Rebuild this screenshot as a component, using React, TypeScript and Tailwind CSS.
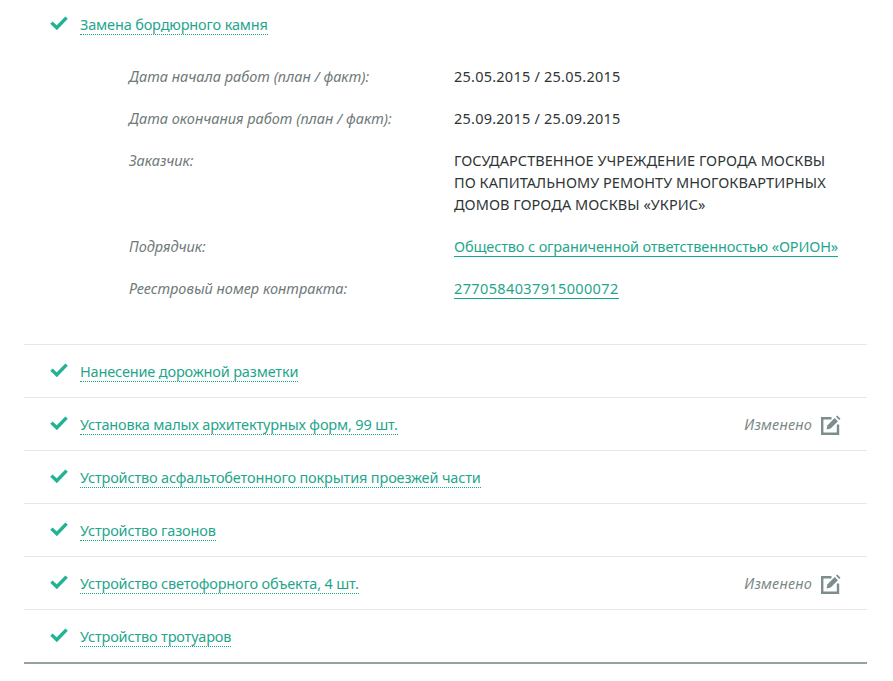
import React from 'react';

const Check = () => (
  <svg width="18" height="14" viewBox="0 0 18 14" className="shrink-0 mt-[-3px]">
    <path d="M1.4 6.6 L6.8 11.8 L16.6 1.6" fill="none" stroke="#22b296" strokeWidth="3.4" />
  </svg>
);

const EditIcon = () => (
  <svg width="20" height="20" viewBox="0 0 20 20">
    <path d="M10.5 3.2H1.2V18.8H17V9.5" fill="none" stroke="#7d8c8c" strokeWidth="2.4" />
    <path d="M5.5 14.5l1-4.2 7.2-7.2 3.2 3.2-7.2 7.2z" fill="#7d8c8c" />
    <path d="M15 1.8l1.3-1.3 3.2 3.2-1.3 1.3z" fill="#7d8c8c" />
  </svg>
);

const Link = ({ children }: { children: React.ReactNode }) => (
  <span className="text-[#1fa68c] border-b border-dotted border-[#13a98a] leading-[20px] inline-block tracking-[-0.16px]">{children}</span>
);

const details = [
  { label: 'Дата начала работ (план / факт):', value: <span className="tracking-[0.23px]">25.05.2015 / 25.05.2015</span> },
  { label: 'Дата окончания работ (план / факт):', value: <span className="tracking-[0.23px]">25.09.2015 / 25.09.2015</span> },
  {
    label: 'Заказчик:',
    value: (
      <span className="block tracking-[0.05px]">
        ГОСУДАРСТВЕННОЕ УЧРЕЖДЕНИЕ ГОРОДА МОСКВЫ<br />
        ПО КАПИТАЛЬНОМУ РЕМОНТУ МНОГОКВАРТИРНЫХ<br />
        ДОМОВ ГОРОДА МОСКВЫ «УКРИС»
      </span>
    ),
  },
  {
    label: 'Подрядчик:',
    value: <span className="text-[#1fa68c] border-b border-[#13a98a] inline-block leading-[20px] tracking-[-0.13px]">Общество с ограниченной ответственностью «ОРИОН»</span>,
  },
  {
    label: 'Реестровый номер контракта:',
    value: <span className="text-[#1fa68c] border-b border-[#13a98a] inline-block leading-[20px] tracking-[0.37px]">2770584037915000072</span>,
  },
];

const rows = [
  { title: 'Нанесение дорожной разметки' },
  { title: 'Установка малых архитектурных форм, 99 шт.', changed: true },
  { title: 'Устройство асфальтобетонного покрытия проезжей части' },
  { title: 'Устройство газонов' },
  { title: 'Устройство светофорного объекта, 4 шт.', changed: true },
  { title: 'Устройство тротуаров' },
];

export default function App() {
  return (
    <div className="w-[893px] h-[681px] overflow-hidden bg-white pl-6 pr-[26px] font-['Noto_Sans',sans-serif] text-[14.5px] text-[#2f3535]">
      <div className="h-[345px] border-b border-[#e6e8e8]">
        <div className="flex items-center h-[49px] pl-[26px] gap-3">
          <Check />
          <Link>Замена бордюрного камня</Link>
        </div>
        <div className="pl-[105px] pt-[16px] flex flex-col gap-[20px]">
          {details.map(d => (
            <div key={d.label} className="flex leading-[22px]">
              <div className="w-[325px] shrink-0 italic text-[#6f7a7a]">{d.label}</div>
              <div>{d.value}</div>
            </div>
          ))}
        </div>
      </div>
      {rows.map((r, i) => (
        <div
          key={r.title}
          className={`flex items-center pl-[26px] pr-[26px] gap-3 ${i === rows.length - 1 ? 'h-[54px] border-b-2 border-[#94a3a1]' : 'h-[53px] border-b border-[#e6e8e8]'}`}
        >
          <Check />
          <Link>{r.title}</Link>
          {r.changed && (
            <div className="ml-auto flex items-center gap-[9px] italic text-[#7d8888] tracking-[0.2px] pt-[1px]">
              <span>Изменено</span>
              <EditIcon />
            </div>
          )}
        </div>
      ))}
    </div>
  );
}
